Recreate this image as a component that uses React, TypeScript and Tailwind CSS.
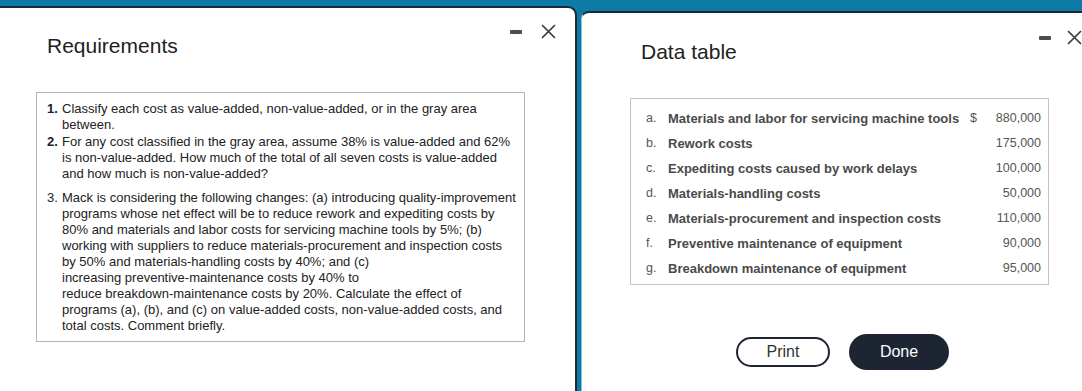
import React from 'react';

const font = { fontFamily: '"Liberation Sans", Arial, sans-serif' };

function CloseIcon() {
  return (
    <svg width="15" height="15" viewBox="0 0 15 15" className="block">
      <path d="M1.5 1.5 L13.5 13.5 M13.5 1.5 L1.5 13.5" stroke="#3a3a3a" strokeWidth="1.7" strokeLinecap="round" />
    </svg>
  );
}

function Minimize() {
  return <div className="w-[12px] h-[4px] rounded-[1px] bg-[#4d4d4d]" />;
}

const requirements: { num: string; bold: boolean; lines: string[] }[] = [
  {
    num: '1.',
    bold: true,
    lines: ['Classify each cost as value-added, non-value-added, or in the gray area', 'between.'],
  },
  {
    num: '2.',
    bold: true,
    lines: [
      'For any cost classified in the gray area, assume 38% is value-added and 62%',
      'is non-value-added. How much of the total of all seven costs is value-added',
      'and how much is non-value-added?',
    ],
  },
  {
    num: '3.',
    bold: false,
    lines: [
      'Mack is considering the following changes: (a) introducing quality-improvement',
      'programs whose net effect will be to reduce rework and expediting costs by',
      '80% and materials and labor costs for servicing machine tools by 5%; (b)',
      'working with suppliers to reduce materials-procurement and inspection costs',
      'by 50% and materials-handling costs by 40%; and (c)',
      'increasing preventive-maintenance costs by 40% to',
      'reduce breakdown-maintenance costs by 20%. Calculate the effect of',
      'programs (a), (b), and (c) on value-added costs, non-value-added costs, and',
      'total costs. Comment briefly.',
    ],
  },
];

const rows = [
  { l: 'a.', label: 'Materials and labor for servicing machine tools', value: '880,000', dollar: true },
  { l: 'b.', label: 'Rework costs', value: '175,000' },
  { l: 'c.', label: 'Expediting costs caused by work delays', value: '100,000' },
  { l: 'd.', label: 'Materials-handling costs', value: '50,000' },
  { l: 'e.', label: 'Materials-procurement and inspection costs', value: '110,000' },
  { l: 'f.', label: 'Preventive maintenance of equipment', value: '90,000' },
  { l: 'g.', label: 'Breakdown maintenance of equipment', value: '95,000' },
];

export default function App() {
  return (
    <div className="flex h-[391px] w-[1082px] overflow-hidden bg-[#0f7aa5]" style={font}>
      {/* Requirements window */}
      <div className="w-[577px] mt-[6px] bg-white border-t-2 border-r-2 border-[#1b2b35] rounded-tr-[9px] flex flex-col">
        <div className="flex items-start">
          <h2 className="ml-[47px] mt-[27px] text-[21px] leading-none text-[#222]">Requirements</h2>
          <div className="ml-auto mr-[19px] mt-[16px] h-[15px] flex items-center gap-[19px]">
            <Minimize />
            <CloseIcon />
          </div>
        </div>
        <div className="ml-[36px] mt-[36px] w-[489px] border border-[#b5b5b5] pl-[10px] pt-[8px] pb-[7px] text-[13px] leading-[16px] text-[#222]">
          {requirements.map((r, i) => (
            <div key={r.num} className={`flex ${i === 1 ? 'mt-[1px]' : i === 2 ? 'mt-[8px]' : ''}`}>
              <span className={`w-[15px] shrink-0 ${r.bold ? 'font-bold' : ''}`}>{r.num}</span>
              <div>
                {r.lines.map((line) => (
                  <div key={line} className="whitespace-nowrap">
                    {line}
                  </div>
                ))}
              </div>
            </div>
          ))}
        </div>
      </div>

      {/* Data table window */}
      <div className="flex-1 ml-[4px] mt-[11px] bg-white border-t-2 border-l border-t-[#1b2b35] border-l-[#86c3dd] rounded-tl-[8px] flex flex-col">
        <div className="flex items-start">
          <h2 className="ml-[59px] mt-[28px] text-[21px] leading-none text-[#222]">Data table</h2>
          <div className="ml-auto mt-[17px] h-[15px] flex items-center gap-[16px]">
            <Minimize />
            <CloseIcon />
          </div>
        </div>
        <div className="ml-[48px] mt-[36px] w-[419px] border border-[#c4c4c4] pl-[15px] pr-[7px] pt-[7px] pb-[3px] text-[12.5px] text-[#555]">
          {rows.map((r) => (
            <div key={r.l} className="flex items-center h-[25px]">
              <span className="w-[22px] shrink-0">{r.l}</span>
              <span className="flex-1 font-bold text-[13px] text-[#4a4a4a] whitespace-nowrap">{r.label}</span>
              <span className="w-[71px] flex justify-between">
                <span>{r.dollar ? '$' : ''}</span>
                <span>{r.value}</span>
              </span>
            </div>
          ))}
        </div>
        <div className="ml-[154px] mt-[49px] flex items-center gap-[19px]">
          <button className="w-[94px] h-[30px] rounded-full border-2 border-[#1e2530] bg-white text-[16px] text-[#333]">
            Print
          </button>
          <button className="w-[100px] h-[36px] rounded-full bg-[#1e2532] text-[16px] text-white">
            Done
          </button>
        </div>
      </div>
    </div>
  );
}
